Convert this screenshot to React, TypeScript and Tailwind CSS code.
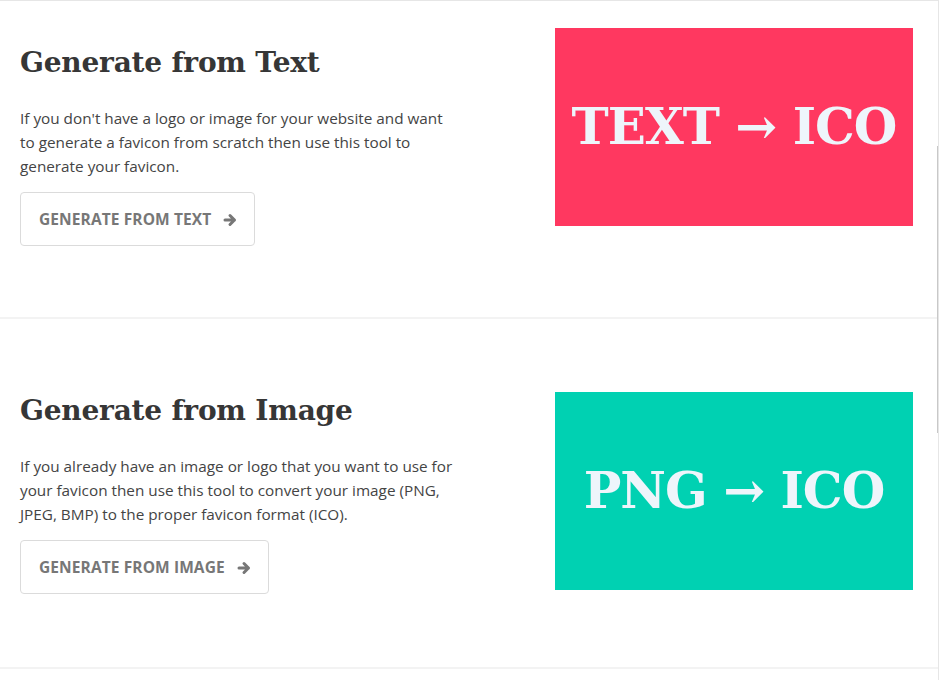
const slab = { fontFamily: '"DejaVu Serif", "Liberation Serif", serif' };

function Arrow() {
  return (
    <svg viewBox="0 0 14 14" className="h-[14px] w-[14px]" fill="none" stroke="currentColor" strokeWidth="3" strokeLinecap="round" strokeLinejoin="round">
      <path d="M2 7h9.5M7 2.5 11.5 7 7 11.5" />
    </svg>
  );
}

function Section({
  title,
  text,
  button,
  label,
  color,
  top,
  bottom,
  offset,
}: {
  title: string;
  text: string;
  button: string;
  label: string;
  color: string;
  top: string;
  bottom: string;
  offset: string;
}) {
  return (
    <section className={`flex items-start justify-between border-b-2 border-[#f3f3f3] pl-5 pr-[25px] ${top} ${bottom}`}>
      <div className={`w-[436px] ${offset}`}>
        <h2 className="text-[28px] leading-[38px] font-semibold text-[#363636] tracking-[-0.2px]" style={slab}>
          {title}
        </h2>
        <p className="mt-[24px] text-[15.3px] leading-[24px] text-[#444]">{text}</p>
        <button className="mt-[14px] flex h-[54px] items-center gap-[12px] rounded-[4px] border border-[#dbdbdb] bg-white pl-[18px] pr-[17px] pt-px text-[15.5px] font-bold uppercase tracking-[0.1px] text-[#777]">
          {button}
          <Arrow />
        </button>
      </div>
      <div className={`flex h-[198px] w-[358px] items-center justify-center ${color}`}>
        <span className="text-[50px] leading-none font-bold text-[#eef5fb] tracking-[-1px]" style={slab}>
          {label}
        </span>
      </div>
    </section>
  );
}

export default function App() {
  return (
    <main
      className="relative min-h-[680px] border-t border-r border-[#e6e6e6] bg-white"
      style={{ fontFamily: '"Open Sans", "Noto Sans", sans-serif' }}
    >
      <Section
        title="Generate from Text"
        text="If you don't have a logo or image for your website and want to generate a favicon from scratch then use this tool to generate your favicon."
        button="Generate from Text"
        label="TEXT → ICO"
        color="bg-[#ff3860]"
        top="pt-[27px]"
        bottom="h-[318px]"
        offset="pt-[16px]"
      />
      <Section
        title="Generate from Image"
        text="If you already have an image or logo that you want to use for your favicon then use this tool to convert your image (PNG, JPEG, BMP) to the proper favicon format (ICO)."
        button="Generate from Image"
        label="PNG → ICO"
        color="bg-[#00d1b2]"
        top="pt-[73px]"
        bottom="h-[350px]"
        offset="pt-0"
      />
      <div className="absolute right-0 top-[145px] h-[287px] w-px bg-[#c8c8c8]" />
    </main>
  );
}
